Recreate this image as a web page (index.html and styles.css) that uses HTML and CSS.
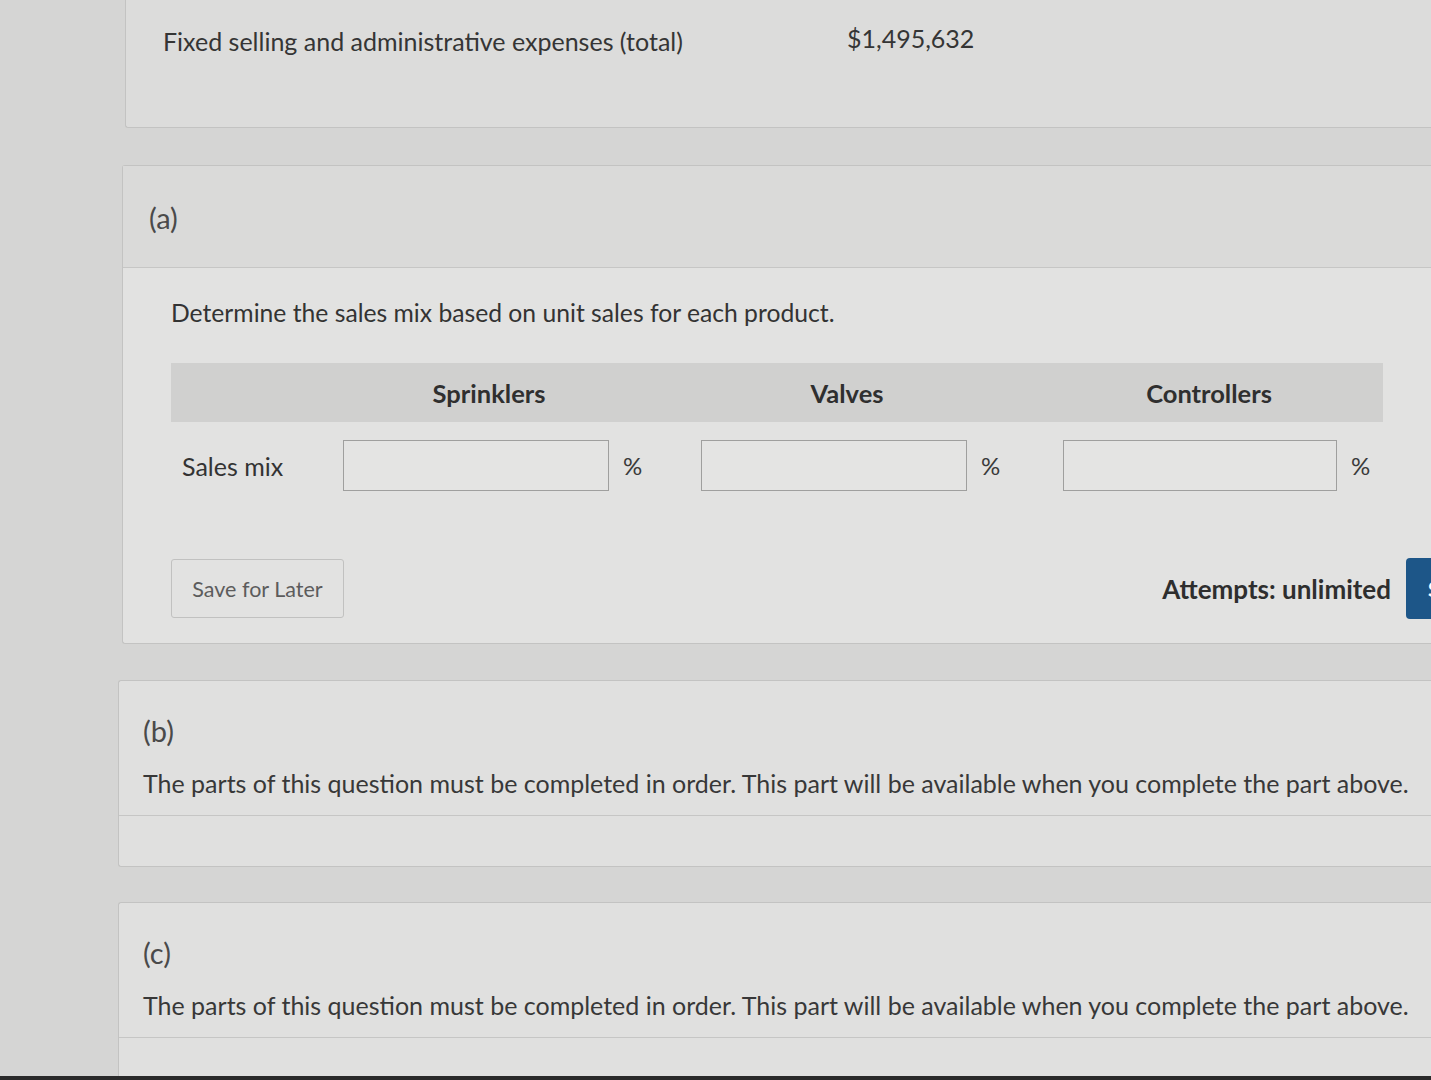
FILE: index.html
```html
<!DOCTYPE html>
<html lang="en">
<head>
<meta charset="utf-8">
<title>Sales mix</title>
<link rel="stylesheet" href="styles.css">
</head>
<body>
<main class="page">
  <section class="card card-top">
    <div class="data-row">
      <span class="data-label">Fixed selling and administrative expenses (total)</span>
      <span class="data-value">$1,495,632</span>
    </div>
  </section>

  <section class="card card-a">
    <header class="part-head">
      <h2 class="part-label">(a)</h2>
    </header>
    <div class="part-body">
      <p class="prompt">Determine the sales mix based on unit sales for each product.</p>
      <div class="mix-table">
        <div class="mix-head">
          <span class="head-cell"></span>
          <span class="head-cell"><span class="head-text">Sprinklers</span></span>
          <span class="head-cell"><span class="head-text">Valves</span></span>
          <span class="head-cell"><span class="head-text">Controllers</span></span>
        </div>
        <div class="mix-row">
          <span class="row-label">Sales mix</span>
          <span class="entry"><input class="field" type="text" aria-label="Sprinklers"><span class="unit">%</span></span>
          <span class="entry"><input class="field" type="text" aria-label="Valves"><span class="unit">%</span></span>
          <span class="entry"><input class="field wide" type="text" aria-label="Controllers"><span class="unit">%</span></span>
        </div>
      </div>
      <div class="actions">
        <button class="btn-save" type="button">Save for Later</button>
        <div class="submit-group">
          <span class="attempts">Attempts: unlimited</span>
          <button class="btn-submit" type="button">Submit Answer</button>
        </div>
      </div>
    </div>
  </section>

  <section class="card card-locked card-b">
    <h2 class="part-label">(b)</h2>
    <p class="locked-text">The parts of this question must be completed in order. This part will be available when you complete the part above.</p>
    <div class="locked-foot"></div>
  </section>

  <section class="card card-locked card-c">
    <h2 class="part-label">(c)</h2>
    <p class="locked-text">The parts of this question must be completed in order. This part will be available when you complete the part above.</p>
    <div class="locked-foot"></div>
  </section>
</main>
<div class="screen-edge"></div>
</body>
</html>
```

FILE: styles.css
```css
html, body {
  margin: 0;
  padding: 0;
  overflow: hidden;
  height: 1080px;
}

body {
  background: #d5d5d4;
  font-family: Lato, "Open Sans", sans-serif;
  color: #353535;
  position: relative;
}

.page {
  width: 1700px;
  display: flex;
  flex-direction: column;
}

.card {
  background: #dfdfde;
  border: 1px solid #c3c3c2;
  border-right: none;
  border-radius: 3px 0 0 3px;
}

/* top summary card */
.card-top {
  margin-left: 125px;
  height: 128px;
  border-top: none;
  border-radius: 0 0 0 3px;
  box-sizing: border-box;
  background: #dcdcdb;
}

.data-row {
  display: grid;
  grid-template-columns: 684px 300px;
  padding: 26px 0 0 37px;
  font-size: 25px;
  line-height: 30px;
}

.data-value {
  margin-top: -3px;
}

/* part (a) */
.card-a {
  margin-left: 122px;
  margin-top: 37px;
  height: 479px;
  box-sizing: border-box;
  background: #e2e2e1;
}

.part-head {
  height: 102px;
  border-bottom: 1px solid #c6c6c5;
  background: #dadad9;
  padding: 32px 0 0 26px;
  box-sizing: border-box;
}

.part-label {
  margin: 0;
  font-size: 29px;
  font-weight: 400;
  line-height: 40px;
  color: #4a4a4a;
}

.part-body {
  padding: 29px 0 0 48px;
}

.prompt {
  margin: 0;
  font-size: 24.7px;
  line-height: 32px;
  color: #333;
}

.mix-table {
  width: 1212px;
  margin-top: 34px;
}

.mix-head,
.mix-row {
  display: grid;
  grid-template-columns: 172px 358px 362px 320px;
}

.mix-head {
  height: 59px;
  background: #d0d0cf;
  align-items: center;
  font-weight: 700;
  font-size: 25.5px;
  color: #2f2f2f;
}

.head-text {
  display: block;
  width: 292px;
  text-align: center;
}

.mix-row {
  padding-top: 18px;
  align-items: center;
}

.row-label {
  padding-left: 11px;
  font-size: 25px;
  color: #333;
}

.entry {
  display: flex;
  align-items: center;
  gap: 14px;
}

.field {
  width: 266px;
  height: 51px;
  box-sizing: border-box;
  border: 1px solid #9f9f9e;
  border-radius: 0;
  background: #e4e4e3;
  margin: 0;
  padding: 0 10px;
  font-family: inherit;
  font-size: 20px;
}

.field.wide {
  width: 274px;
}

.unit {
  font-size: 24px;
  color: #3a3a3a;
}

.actions {
  display: flex;
  justify-content: space-between;
  align-items: center;
  width: 1405px;
  margin-top: 67px;
}

.btn-save {
  width: 173px;
  height: 59px;
  border: 1px solid #c1c1c0;
  border-radius: 3px;
  background: #e2e2e1;
  font-family: inherit;
  font-size: 21.5px;
  color: #5c5c5c;
  padding: 0;
}

.submit-group {
  display: flex;
  align-items: center;
  gap: 15px;
}

.attempts {
  font-weight: 700;
  font-size: 26px;
  color: #2e2e2e;
}

.btn-submit {
  width: 170px;
  height: 61px;
  border: none;
  border-radius: 4px;
  background: #1d5688;
  color: #ffffff;
  font-family: inherit;
  font-size: 20px;
  font-weight: 700;
  padding: 0 0 0 22px;
  text-align: left;
}

/* locked parts */
.card-locked {
  margin-left: 118px;
  box-sizing: border-box;
  padding: 30px 0 0 24px;
  background: #e0e0df;
}

.card-b {
  margin-top: 36px;
  height: 187px;
}

.card-c {
  margin-top: 35px;
  height: 200px;
}

.locked-text {
  margin: 16px 0 0;
  font-size: 25px;
  line-height: 32px;
  color: #383838;
}

.locked-foot {
  margin: 16px 0 0 -24px;
  border-top: 1px solid #c6c6c5;
}

.screen-edge {
  position: absolute;
  left: 0;
  right: 0;
  bottom: 0;
  height: 4px;
  background: #2a2a2a;
}
```
